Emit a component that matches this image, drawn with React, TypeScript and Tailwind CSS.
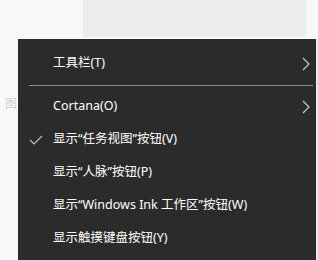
import React from "react";

const Chevron = () => (
  <svg width="8" height="14" viewBox="0 0 8 14" className="text-[#c8c8c8]">
    <path d="M1 1 L7 7 L1 13" fill="none" stroke="currentColor" strokeWidth="1.2" />
  </svg>
);

const Check = () => (
  <svg width="14" height="10" viewBox="0 0 14 10" className="text-[#bdbdbd]">
    <path d="M1 5 L5 9 L13 1" fill="none" stroke="currentColor" strokeWidth="1.2" />
  </svg>
);

type Item = { label: string; sub?: boolean; checked?: boolean };

const MenuRow = ({ label, sub, checked }: Item) => (
  <div className="flex h-[33px] items-center">
    <div className="flex w-[35px] justify-end pr-[10px]">{checked && <Check />}</div>
    <span className="flex-1 text-[12.5px] text-white">{label}</span>
    <div className="flex w-[14px] justify-start">{sub && <Chevron />}</div>
  </div>
);

const Separator = () => (
  <div className="flex h-[10px] items-center pl-[11px] pr-[3px]">
    <div className="h-px w-full bg-[#8a8a8a]" />
  </div>
);

const App: React.FC = () => {
  return (
    <div
      className="flex h-[260px] w-[318px] flex-col overflow-hidden bg-[#f8f8f8]"
      style={{ fontFamily: '"Segoe UI", "Noto Sans", "Noto Sans CJK SC", sans-serif' }}
    >
      {/* window behind the menu */}
      <div className="flex h-[39px] shrink-0">
        <div className="w-[83px]" />
        <div className="h-[37px] w-[223px] bg-[#ececec]" />
      </div>

      <div className="flex flex-1">
        {/* faint text peeking from under the menu */}
        <div className="w-[18px] pt-[59px] pl-[5px] text-[12px] leading-none text-[#d0d0d0]">
          图
        </div>

        {/* context menu */}
        <div className="w-[298px] bg-[#2b2b2b] pt-[8px]">
          <MenuRow label="工具栏(T)" sub />
          <Separator />
          <MenuRow label="Cortana(O)" sub />
          <MenuRow label="显示“任务视图”按钮(V)" checked />
          <MenuRow label="显示“人脉”按钮(P)" />
          <MenuRow label="显示“Windows Ink 工作区”按钮(W)" />
          <MenuRow label="显示触摸键盘按钮(Y)" />
          <Separator />
        </div>
        <div className="w-[2px] bg-[#e8e8e8]" />
      </div>
    </div>
  );
};

export default App;
